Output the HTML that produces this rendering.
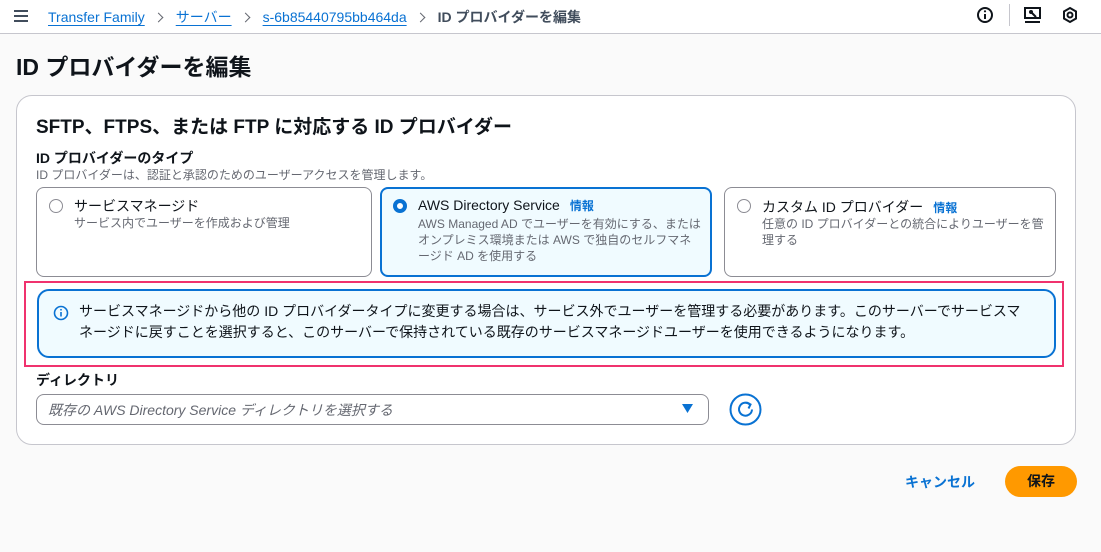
<!DOCTYPE html>
<html><head><meta charset="utf-8"><style>
*{box-sizing:border-box;margin:0;padding:0}
body{width:1101px;height:552px;background:#fafafa;font-family:"Liberation Sans","Noto Sans CJK JP",sans-serif;color:#0f141a;position:relative;overflow:hidden}
.abs{position:absolute}
.hdr{left:0;top:0;width:1101px;height:34px;background:#fff;border-bottom:1px solid #c6c6cd}
.bc{top:7px;font-size:14px;white-space:nowrap}
.bc a{color:#0972d3;text-decoration:underline;text-underline-offset:3px}
.sep{display:inline-block;width:7px;height:7px;border-top:1.5px solid #656871;border-right:1.5px solid #656871;transform:rotate(45deg);margin:0 14px 1px 10px}
h1{position:absolute;left:16px;top:48px;font-size:23px;font-weight:bold}
.card{left:16px;top:95px;width:1060px;height:350px;background:#fff;border:1px solid #c6c6cd;border-radius:16px}
h2{position:absolute;left:36px;top:112px;font-size:19px;font-weight:bold}
.lbl{font-size:14px;font-weight:bold}
.desc{font-size:12px;color:#656871}
.tile{border:1px solid #8c8c94;border-radius:8px;background:#fff}
.tile.sel{border:2px solid #0972d3;background:#f0fbff}
.radio{width:14px;height:14px;border:1.5px solid #8c8c94;border-radius:50%}
.radio.on{border:4px solid #0972d3;background:#fff}
.tt{font-size:14px}
.td{font-size:12px;color:#656871;line-height:16px}
.info{color:#0972d3;font-weight:bold;font-size:12px;margin-left:10px}
</style></head><body>
<div class="abs hdr"></div>
<div class="abs" style="left:14px;top:10px;width:14px">
<div style="height:2px;background:#414d5c;margin-bottom:3px"></div><div style="height:2px;background:#414d5c;margin-bottom:3px"></div><div style="height:2px;background:#414d5c"></div></div>
<div class="abs bc" style="left:48px"><a>Transfer Family</a><span class="sep"></span><a>サーバー</a><span class="sep"></span><a>s-6b85440795bb464da</a><span class="sep"></span><b style="color:#414d5c">ID プロバイダーを編集</b></div>
<svg class="abs" style="left:976px;top:6px" width="18" height="18" viewBox="0 0 18 18"><circle cx="9" cy="9" r="7" fill="none" stroke="#0f141a" stroke-width="2"/><line x1="9" y1="8" x2="9" y2="13" stroke="#0f141a" stroke-width="2"/><circle cx="9" cy="5.3" r="1.1" fill="#0f141a"/></svg>
<div class="abs" style="left:1009px;top:4px;width:1px;height:22px;background:#c6c6cd"></div>
<svg class="abs" style="left:1023px;top:5px" width="20" height="20" viewBox="0 0 20 20"><rect x="2" y="3" width="15" height="10" fill="none" stroke="#0f141a" stroke-width="2"/><line x1="2" y1="17" x2="17" y2="17" stroke="#0f141a" stroke-width="2"/><path d="M8 7l5 5" stroke="#0f141a" stroke-width="2"/><circle cx="8" cy="7" r="2" fill="#0f141a"/></svg>
<svg class="abs" style="left:1061px;top:6px" width="18" height="18" viewBox="0 0 18 18"><path d="M9 2l6 3.5v7L9 16l-6-3.5v-7z" fill="none" stroke="#0f141a" stroke-width="2"/><circle cx="9" cy="9" r="2.5" fill="none" stroke="#0f141a" stroke-width="2"/></svg>
<h1>ID プロバイダーを編集</h1>
<div class="abs card"></div>
<h2>SFTP、FTPS、または FTP に対応する ID プロバイダー</h2>
<div class="abs lbl" style="left:36px;top:148px">ID プロバイダーのタイプ</div>
<div class="abs desc" style="left:36px;top:166px">ID プロバイダーは、認証と承認のためのユーザーアクセスを管理します。</div>
<div class="abs tile" style="left:36px;top:187px;width:336px;height:90px"></div>
<div class="abs radio" style="left:49px;top:199px"></div>
<div class="abs tt" style="left:74px;top:196px">サービスマネージド</div>
<div class="abs td" style="left:74px;top:215px">サービス内でユーザーを作成および管理</div>
<div class="abs tile sel" style="left:380px;top:187px;width:332px;height:90px"></div>
<div class="abs radio on" style="left:393px;top:199px"></div>
<div class="abs tt" style="left:418px;top:197px">AWS Directory Service<span class="info">情報</span></div>
<div class="abs td" style="left:418px;top:216px;width:290px">AWS Managed AD でユーザーを有効にする、または<br>オンプレミス環境または AWS で独自のセルフマネ<br>ージド AD を使用する</div>
<div class="abs tile" style="left:724px;top:187px;width:332px;height:90px"></div>
<div class="abs radio" style="left:737px;top:199px"></div>
<div class="abs tt" style="left:762px;top:197px">カスタム ID プロバイダー<span class="info">情報</span></div>
<div class="abs td" style="left:762px;top:216px">任意の ID プロバイダーとの統合によりユーザーを管<br>理する</div>
<div class="abs" style="left:24px;top:281px;width:1040px;height:86px;border:2px solid #f0326e"></div>
<div class="abs" style="left:37px;top:289px;width:1019px;height:69px;border:2px solid #0972d3;border-radius:12px;background:#f0fbff"></div>
<svg class="abs" style="left:53px;top:305px" width="16" height="16" viewBox="0 0 16 16"><circle cx="8" cy="8" r="6.5" fill="none" stroke="#0972d3" stroke-width="1.6"/><line x1="8" y1="7" x2="8" y2="11.5" stroke="#0972d3" stroke-width="1.6"/><circle cx="8" cy="4.8" r="0.9" fill="#0972d3"/></svg>
<div class="abs" style="left:79px;top:301px;width:970px;font-size:14px;line-height:21px;white-space:nowrap">サービスマネージドから他の ID プロバイダータイプに変更する場合は、サービス外でユーザーを管理する必要があります。このサーバーでサービスマ<br>ネージドに戻すことを選択すると、このサーバーで保持されている既存のサービスマネージドユーザーを使用できるようになります。</div>
<div class="abs lbl" style="left:36px;top:370px">ディレクトリ</div>
<div class="abs" style="left:36px;top:394px;width:673px;height:31px;border:1px solid #8c8c94;border-radius:8px;background:#fff"></div>
<div class="abs" style="left:48px;top:400px;font-size:14px;font-style:italic;color:#656871">既存の AWS Directory Service ディレクトリを選択する</div>
<svg class="abs" style="left:682px;top:404px" width="11" height="9" viewBox="0 0 11 9"><path d="M0 0h11L5.5 9z" fill="#0972d3"/></svg>
<svg class="abs" style="left:729px;top:393px" width="33" height="33" viewBox="0 0 33 33"><circle cx="16.5" cy="16.5" r="15" fill="#fff" stroke="#0972d3" stroke-width="2"/><path d="M21 11.5A6.5 6.5 0 1 0 23 16.5" fill="none" stroke="#0972d3" stroke-width="2"/><path d="M17.5 9.5l4 2-2 4" fill="none" stroke="#0972d3" stroke-width="2"/></svg>
<div class="abs" style="left:905px;top:472px;font-size:14px;font-weight:bold;color:#0972d3">キャンセル</div>
<div class="abs" style="left:1005px;top:466px;width:72px;height:31px;border-radius:16px;background:#ff9900;font-size:14px;font-weight:bold;text-align:center;line-height:31px">保存</div>
</body></html>
